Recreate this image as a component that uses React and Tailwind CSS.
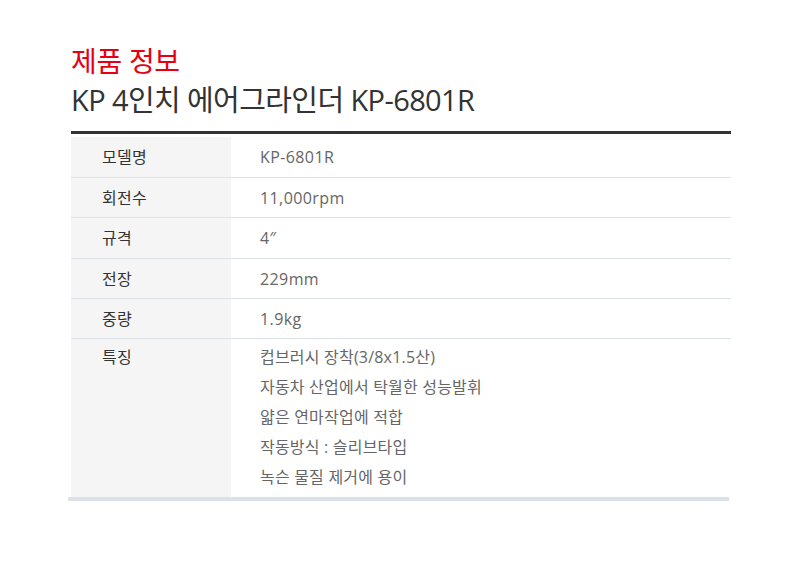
const ROWS = [
  { label: "모델명", value: ["KP-6801R"], h: "h-[44px] pt-[3px]" },
  { label: "회전수", value: ["11,000rpm"], h: "h-[40px]" },
  { label: "규격", value: ["4″"], h: "h-[41px]" },
  { label: "전장", value: ["229mm"], h: "h-[40px]" },
  { label: "중량", value: ["1.9kg"], h: "h-[40px]" },
];

const FEATURES = [
  "컵브러시 장착(3/8x1.5산)",
  "자동차 산업에서 탁월한 성능발휘",
  "얇은 연마작업에 적합",
  "작동방식 : 슬리브타입",
  "녹슨 물질 제거에 용이",
];

export default function App() {
  return (
    <div
      className="w-[800px] h-[569px] bg-white"
      style={{ fontFamily: '"Open Sans", "Noto Sans CJK KR", sans-serif' }}
    >
      <div className="pl-[71px] pt-[42px] w-[731px]">
        {/* heading */}
        <h2 className="text-[28px] leading-[38px] text-[#e60012] tracking-[-0.3px]">제품 정보</h2>
        <h1 className="text-[29px] leading-[40px] text-[#333] tracking-[-0.6px]">
          KP 4인치 에어그라인더 KP-6801R
        </h1>

        {/* spec table */}
        <div className="mt-[11px] border-t-[3px] border-[#333]">
          {ROWS.map((row) => (
            <div key={row.label} className={`flex border-b border-[#dde3ea] ${row.h}`}>
              <div className="w-[160px] shrink-0 h-full bg-[#f5f5f5] pl-[31px] flex items-center text-[16px] text-[#333] tracking-[0.3px]">
                {row.label}
              </div>
              <div className="flex-1 h-full pl-[29px] flex items-center text-[16px] text-[#666] tracking-[0.4px]">
                {row.value}
              </div>
            </div>
          ))}

          {/* features row */}
          <div className="flex">
            <div className="w-[160px] shrink-0 bg-[#f5f5f5] pl-[31px] pt-[3px] text-[16px] leading-[30px] text-[#333] tracking-[0.3px]">
              특징
            </div>
            <div className="flex-1 pl-[29px] pt-[3px] pb-[5px] text-[16px] leading-[30px] text-[#666] tracking-[0.2px]">
              {FEATURES.map((v) => (
                <div key={v}>{v}</div>
              ))}
            </div>
          </div>
          <div className="-ml-[3px] mr-[2px] h-[4px] bg-[#dbe1e8]" />
        </div>
      </div>
    </div>
  );
}
